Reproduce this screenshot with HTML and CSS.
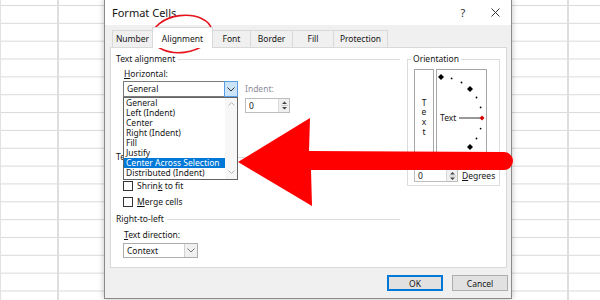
FILE: index.html
```html
<!DOCTYPE html>
<html lang="en">
<head>
    <meta charset="UTF-8">
    <meta name="viewport" content="width=device-width, initial-scale=1.0">
    <title>Format Cells</title>
    <link rel="stylesheet" href="styles.css">
</head>
<body>
    <!-- Format Cells dialog, sitting over the worksheet grid -->
    <div class="dialog">
        <div class="titlebar">
            <span class="title">Format Cells</span>
            <span class="title-btn">?</span>
            <span class="title-btn">
                <svg width="9" height="9" viewBox="0 0 9 9"><path d="M0.5 0.5 L8.5 8.5 M8.5 0.5 L0.5 8.5" stroke="#333" stroke-width="1"/></svg>
            </span>
        </div>

        <!-- Tabs -->
        <div class="tabs">
            <div class="tab tab-number">Number</div>
            <div class="tab tab-alignment active">Alignment</div>
            <div class="tab tab-font">Font</div>
            <div class="tab tab-border">Border</div>
            <div class="tab tab-fill">Fill</div>
            <div class="tab tab-protection">Protection</div>
        </div>

        <!-- Alignment page -->
        <div class="page">
            <div class="main-col">
                <div class="group-title">Text alignment</div>
                <div class="label first"><u>H</u>orizontal:</div>
                <div class="align-row">
                    <div class="combo wide">
                        <span class="combo-text">General</span>
                        <span class="combo-btn open">
                            <svg width="8" height="5" viewBox="0 0 8 5"><polyline points="0.5,0.5 4,4 7.5,0.5" fill="none" stroke="#333"/></svg>
                        </span>
                    </div>
                    <div class="indent">
                        <div class="label disabled">Indent:</div>
                        <div class="spinner">
                            <span class="spin-text">0</span>
                            <span class="spin-btns">
                                <svg width="7" height="11" viewBox="0 0 7 11"><path d="M3.5 1.5 L6 4 L1 4 Z M1 7 L6 7 L3.5 9.5 Z" fill="#444"/><line x1="0" y1="5.5" x2="7" y2="5.5" stroke="#ccc"/></svg>
                            </span>
                        </div>
                    </div>
                </div>
                <!-- room for the Vertical combo, covered by the open list -->
                <div class="covered"></div>

                <div class="group-title control">Text control</div>
                <div class="check wrap"><span class="box"></span></div>
                <div class="check"><span class="box"></span><span>Shrin<u>k</u> to fit</span></div>
                <div class="check"><span class="box"></span><span><u>M</u>erge cells</span></div>

                <div class="group-title rtl">Right-to-left</div>
                <div class="label direction"><u>T</u>ext direction:</div>
                <div class="combo context">
                    <span class="combo-text">Context</span>
                    <span class="combo-btn plain">
                        <svg width="8" height="5" viewBox="0 0 8 5"><polyline points="0.5,0.5 4,4 7.5,0.5" fill="none" stroke="#777"/></svg>
                    </span>
                </div>
            </div>

            <!-- Orientation -->
            <div class="orientation">
                <div class="orient-title">Orientation</div>
                <div class="orient-body">
                    <div class="vtext">
                        <span>T</span><span>e</span><span>x</span><span>t</span>
                    </div>
                    <div class="arc">
                        <svg width="49" height="94" viewBox="0 0 49 94">
                            <g fill="#000">
                                <polygon points="4,4 7,7 4,10 1,7"/>
                                <circle cx="14.6" cy="8.4" r="0.9"/>
                                <circle cx="24.5" cy="12.5" r="0.9"/>
                                <polygon points="33,16 36,19 33,22 30,19"/>
                                <circle cx="39.5" cy="27.5" r="0.9"/>
                                <circle cx="43.6" cy="37.4" r="0.9"/>
                                <circle cx="43.6" cy="58.6" r="0.9"/>
                                <circle cx="39.5" cy="68.5" r="0.9"/>
                                <polygon points="33,74 36,77 33,80 30,77"/>
                                <circle cx="24.5" cy="83.5" r="0.9"/>
                                <circle cx="14.6" cy="87.6" r="0.9"/>
                                <polygon points="4,86 7,89 4,92 1,89"/>
                            </g>
                            <text x="3" y="51" class="arc-text">Text</text>
                            <line x1="22" y1="48" x2="43" y2="48" stroke="#333" stroke-width="1"/>
                            <polygon points="45,45.5 47.5,48 45,50.5 42.5,48" fill="#d40000"/>
                        </svg>
                    </div>
                </div>
                <div class="degrees">
                    <div class="spinner small">
                        <span class="spin-text">0</span>
                        <span class="spin-btns">
                            <svg width="7" height="10" viewBox="0 0 7 10"><path d="M3.5 1 L6 3.5 L1 3.5 Z M1 6.5 L6 6.5 L3.5 9 Z" fill="#444"/><line x1="0" y1="5" x2="7" y2="5" stroke="#ccc"/></svg>
                        </span>
                    </div>
                    <span class="degrees-label"><u>D</u>egrees</span>
                </div>
            </div>

            <!-- Open Horizontal dropdown -->
            <div class="dropdown">
                <div class="options">
                    <div class="option">General</div>
                    <div class="option">Left (Indent)</div>
                    <div class="option">Center</div>
                    <div class="option">Right (Indent)</div>
                    <div class="option">Fill</div>
                    <div class="option">Justify</div>
                    <div class="option selected">Center Across Selection</div>
                    <div class="option">Distributed (Indent)</div>
                </div>
                <div class="scrollbar">
                    <svg width="7" height="4" viewBox="0 0 7 4"><polyline points="0.5,3.5 3.5,0.5 6.5,3.5" fill="none" stroke="#b5b5b5"/></svg>
                    <svg width="7" height="4" viewBox="0 0 7 4"><polyline points="0.5,0.5 3.5,3.5 6.5,0.5" fill="none" stroke="#b5b5b5"/></svg>
                </div>
            </div>
        </div>

        <div class="buttons">
            <button class="btn default">OK</button>
            <button class="btn">Cancel</button>
        </div>
    </div>

    <!-- Red annotations drawn over the screenshot -->
    <svg class="markup" width="600" height="300" viewBox="0 0 600 300">
        <ellipse cx="182" cy="34" rx="30" ry="18.5" transform="rotate(-7 182 34)" fill="none" stroke="#e5131b" stroke-width="1.6"/>
        <path d="M238 162 L310 118 L309 151 L504 152 A9 9 0 0 1 504 170 L311 170 L312 206 Z" fill="#ff0000"/>
    </svg>
</body>
</html>
```

FILE: styles.css
```css
* {
    box-sizing: border-box;
}

body {
    margin: 0;
    width: 600px;
    height: 300px;
    overflow: hidden;
    position: relative;
    font-family: "Noto Sans", "Open Sans", sans-serif;
    font-size: 8.5px;
    color: #151515;
    background-color: #fff;
    background-image:
        linear-gradient(to right, #e2e2e2 1px, transparent 1px),
        linear-gradient(to right, transparent 57px, #dedede 57px, #dedede 59px, transparent 59px),
        linear-gradient(to right, transparent 567px, #dedede 567px, #dedede 569px, transparent 569px),
        linear-gradient(to bottom, #dadada 1px, transparent 1px);
    background-size: 100% 100%, 100% 100%, 100% 100%, 100% 17.85px;
    background-position: 0 0, 0 0, 0 0, 0 5px;
}

u {
    text-decoration-thickness: 1px;
    text-underline-offset: 1px;
}

/* Dialog window */
.dialog {
    position: absolute;
    left: 104px;
    top: -1px;
    width: 408px;
    height: 300px;
    border: 1px solid #8a8a8a;
    background-color: #f0f0f0;
    box-shadow: 0 0 6px rgba(0, 0, 0, 0.25);
    display: flex;
    flex-direction: column;
}

.titlebar {
    height: 25px;
    background-color: #fff;
    display: flex;
    align-items: center;
    padding-left: 7px;
}

.title {
    flex: 1;
    font-size: 11px;
}

.title-btn {
    width: 32px;
    font-size: 11px;
    display: flex;
    justify-content: center;
    align-items: center;
    color: #333;
}

/* Tabs */
.tabs {
    display: flex;
    align-items: flex-end;
    height: 17px;
    margin-top: 5px;
    padding-left: 7px;
    position: relative;
    z-index: 1;
}

.tab {
    height: 17px;
    line-height: 15px;
    text-align: center;
    border: 1px solid #d9d9d9;
    border-bottom: none;
    background-color: #f0f0f0;
    margin-right: -1px;
}

.tab-number { width: 41px; }
.tab-alignment { width: 61px; }
.tab-font { width: 39px; }
.tab-border { width: 43px; }
.tab-fill { width: 42px; }
.tab-protection { width: 55px; }

.tab.active {
    height: 21px;
    margin-bottom: -1px;
    padding-top: 3px;
    line-height: 16px;
    background-color: #fff;
}

/* Tab page */
.page {
    height: 221px;
    margin: 0 4px 0 5px;
    background-color: #fff;
    border: 1px solid #d9d9d9;
    position: relative;
    display: flex;
    padding: 6px 0 0 5px;
}

.main-col {
    width: 284px;
}

.group-title {
    display: flex;
    align-items: center;
    height: 10px;
    line-height: 10px;
}

.group-title::after {
    content: "";
    flex: 1;
    height: 1px;
    background-color: #dcdcdc;
    margin-left: 3px;
}

.group-title.control {
    margin-top: 10px;
}

.group-title.rtl {
    margin-top: 7px;
}

.label {
    line-height: 10px;
    padding-left: 8px;
}

.label.first {
    margin-top: 5px;
}

.label.direction {
    margin-top: 6px;
}

.label.disabled {
    padding-left: 0;
    color: #8d8d9a;
}

.align-row {
    display: flex;
    margin-top: 2px;
    padding-left: 7px;
}

.covered {
    height: 29px;
}

/* Combo boxes */
.combo {
    display: flex;
    height: 16px;
    border: 1px solid #7a7a7a;
    background-color: #fff;
}

.combo.wide {
    width: 115px;
}

.combo.context {
    width: 75px;
    height: 15px;
    margin: 3px 0 0 7px;
    border-color: #adadad;
}

.combo-text {
    flex: 1;
    padding-left: 3px;
    line-height: 14px;
}

.combo.context .combo-text {
    line-height: 13px;
}

.combo-btn {
    width: 13px;
    display: flex;
    align-items: center;
    justify-content: center;
}

.combo-btn.open {
    width: 14px;
    margin: -1px -1px -1px 0;
    background-color: #cce4f7;
    border: 1px solid #569de5;
}

.combo-btn.plain {
    border-left: 1px solid #d0d0d0;
    background-color: #f0f0f0;
}

/* Indent */
.indent {
    margin-left: 7px;
    padding-top: 3px;
}

.spinner {
    display: flex;
    width: 45px;
    height: 15px;
    margin-top: 4px;
    border: 1px solid #bdbdbd;
    background-color: #fff;
}

.spin-text {
    flex: 1;
    padding-left: 3px;
    line-height: 13px;
}

.spin-btns {
    width: 11px;
    display: flex;
    align-items: center;
    justify-content: center;
    background-color: #f0f0f0;
    border-left: 1px solid #d9d9d9;
}

/* Check boxes */
.check {
    display: flex;
    align-items: center;
    height: 10px;
    line-height: 10px;
    padding-left: 7px;
    margin-top: 6px;
}

.check.wrap {
    margin-top: 3px;
}

.box {
    width: 10px;
    height: 10px;
    border: 1px solid #333;
    background-color: #fff;
    margin-right: 4px;
}

/* Orientation */
.orientation {
    width: 93px;
    height: 127px;
    margin: 5px 0 0 7px;
    border: 1px solid #dcdcdc;
    padding-left: 6px;
}

.orient-title {
    width: fit-content;
    margin: -6px 0 0 -3px;
    padding: 0 2px;
    line-height: 10px;
    background-color: #fff;
}

.orient-body {
    display: flex;
    gap: 2px;
    margin-top: 5px;
}

.vtext {
    width: 20px;
    height: 96px;
    border: 1px solid #a6a6a6;
    display: flex;
    flex-direction: column;
    justify-content: center;
    align-items: center;
    line-height: 9.7px;
}

.arc {
    width: 51px;
    height: 96px;
    border: 1px solid #a6a6a6;
}

.arc svg {
    display: block;
}

.arc-text {
    font-family: "Noto Sans", "Open Sans", sans-serif;
    font-size: 8.5px;
    fill: #151515;
}

.degrees {
    display: flex;
    align-items: center;
    margin-top: 4px;
}

.spinner.small {
    width: 44px;
    height: 13px;
    margin-top: 0;
}

.spinner.small .spin-text {
    line-height: 11px;
}

.degrees-label {
    margin-left: 4px;
}

/* Open dropdown list */
.dropdown {
    position: absolute;
    left: 12px;
    top: 49px;
    width: 115px;
    height: 83px;
    border: 1px solid #646464;
    background-color: #fff;
    display: flex;
}

.options {
    flex: 1;
}

.option {
    height: 10px;
    line-height: 10px;
    padding-left: 2px;
    white-space: nowrap;
}

.option.selected {
    background-color: #0078d7;
    color: #fff;
}

.scrollbar {
    width: 12px;
    background-color: #f7f7f7;
    display: flex;
    flex-direction: column;
    justify-content: space-between;
    align-items: center;
    padding: 4px 0 5px;
}

/* Bottom buttons */
.buttons {
    display: flex;
    justify-content: flex-end;
    gap: 9px;
    margin-top: 7px;
    padding-right: 3px;
}

.btn {
    width: 56px;
    height: 16px;
    padding: 0;
    font: inherit;
    color: inherit;
    border: 1px solid #adadad;
    background-color: #e1e1e1;
}

.btn.default {
    border-color: #0078d7;
    box-shadow: inset 0 0 0 1px #0078d7;
}

/* Annotations */
.markup {
    position: absolute;
    left: 0;
    top: 0;
    pointer-events: none;
}
```
